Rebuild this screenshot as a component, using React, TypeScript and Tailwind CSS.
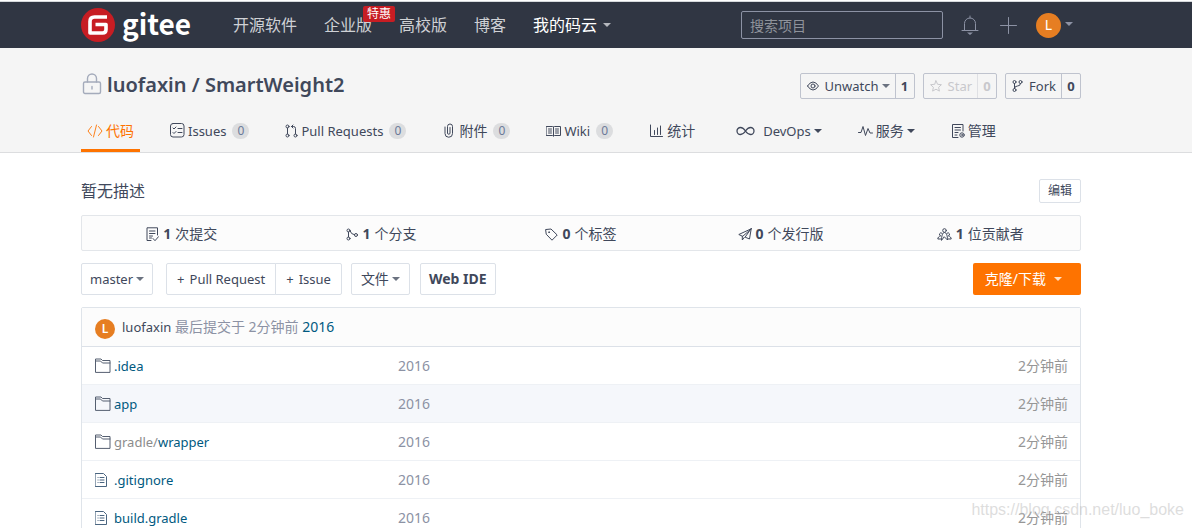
import type { ReactNode } from "react";

function Svg({ w, h, box, children, className = "" }: { w: number; h: number; box?: string; children: ReactNode; className?: string }) {
  return (
    <svg width={w} height={h} viewBox={box ?? `0 0 ${w} ${h}`} fill="none" stroke="currentColor" strokeWidth="1" strokeLinecap="round" strokeLinejoin="round" aria-hidden="true" className={"shrink-0 " + className}>
      {children}
    </svg>
  );
}

const Caret = ({ className = "" }: { className?: string }) => (
  <Svg w={8} h={4} className={className}>
    <path d="M0 0H8L4 4Z" fill="currentColor" stroke="none" />
  </Svg>
);

const CodeIcon = () => (
  <Svg w={16} h={14}>
    <path d="M4.500 2.500L1 7l3.500 4.500M11.500 2.500L15 7l-3.500 4.500M9.500 1L6.500 13" strokeWidth=".9" />
  </Svg>
);
const IssueIcon = () => (
  <Svg w={15} h={15}>
    <rect x="0.500" y="0.500" width="13.500" height="13.500" rx="2.500" />
    <path d="M3 5l1 1 2-2M3 9.500l1 1 2-2M8 5.500h4M8 9.500h4" />
  </Svg>
);
const PullIcon = () => (
  <Svg w={13} h={14}>
    <circle cx="2.500" cy="2.500" r="1.500" />
    <circle cx="2.500" cy="11.500" r="1.500" />
    <circle cx="10.500" cy="11.500" r="1.500" />
    <path d="M2.500 4v6M10.500 10V4.500Q10.500 2.500 8.500 2.500H6.500M8 1L6.500 2.500L8 4" />
  </Svg>
);
const ClipIcon = () => (
  <Svg w={14} h={15} box="-2 0 14 15">
    <path d="M1 4v6.500a3.700 3.700 0 0 0 7.500 0V3.500a2.500 2.500 0 0 0-5 0V10a1.200 1.200 0 0 0 2.500 0V4.500" />
  </Svg>
);
const WikiIcon = () => (
  <Svg w={15} h={12}>
    <path d="M.5 1.500h6l1 .5 1-.5h6v9h-6l-1 .5-1-.5h-6ZM7.500 2v9M2.500 4h3M2.500 6h3M2.500 8h3M9.500 4h3M9.500 6h3M9.500 8h3" />
  </Svg>
);
const ChartIcon = () => (
  <Svg w={15} h={13}>
    <path d="M1.500 1v11.500h12M5.500 6.500v4M8.500 4v6.500M11.500 2v8.500" />
  </Svg>
);
const LoopIcon = () => (
  <Svg w={24} h={10} box="-5 0 24 10">
    <path strokeWidth="1.300" d="M9.500 5C7.500 2 6 1.500 4.500 1.500a3.500 3.500 0 0 0 0 7C6 8.500 7.500 8 9.500 5s3.500-3.500 5-3.500a3.500 3.500 0 0 1 0 7c-1.500 0-3-.5-5-3.500Z" />
  </Svg>
);
const PulseIcon = () => (
  <Svg w={15} h={12}>
    <path d="M.5 7.500h2.500L5 1.500l2.500 9 2.500-7 2 4.500h2.500" />
  </Svg>
);
const ManageIcon = () => (
  <Svg w={14} h={14}>
    <path d="M7 13.500h-5.500V.5h10.500V7M4 3.500h5.500M4 6h5.500M4 8.500h3M4 11h2" />
    <circle cx="11" cy="11" r="2.200" />
    <circle cx="11" cy="11" r=".4" />
  </Svg>
);
const EyeIcon = () => (
  <Svg w={12} h={12}>
    <path d="M.5 6Q3 2 6 2t5.500 4Q9 10 6 10T.5 6Z" />
    <circle cx="6" cy="6" r="2" />
  </Svg>
);
const StarIcon = () => (
  <Svg w={12} h={12}>
    <path d="M6 .8l1.600 3.500 3.800.4-2.800 2.600.8 3.800L6 9.200l-3.400 1.900.8-3.800L.6 4.700l3.800-.4Z" />
  </Svg>
);
const ForkIcon = () => (
  <Svg w={11} h={12}>
    <circle cx="2.500" cy="2" r="1.500" />
    <circle cx="2.500" cy="10" r="1.500" />
    <circle cx="8.500" cy="2" r="1.500" />
    <path d="M2.500 3.500v5M8.500 3.500Q8.500 6 5.500 6T2.500 8.500" />
  </Svg>
);
const CommitIcon = () => (
  <Svg w={13} h={15}>
    <path d="M5 13.500H1V.8h10.500V8M3.500 4h5.500M3.500 6.500h5.500M3.500 9h3M3.500 11h2M7 11.500l2 2.200 3.500-4" />
  </Svg>
);
const BranchIcon = () => (
  <Svg w={12} h={13}>
    <circle cx="2.500" cy="2.500" r="1.500" />
    <circle cx="2.500" cy="10.500" r="1.500" />
    <circle cx="10" cy="7" r="1.500" />
    <path d="M2.500 4v5M4 2.800Q5 6.500 8.500 6.800" />
  </Svg>
);
const TagIcon = () => (
  <Svg w={13} h={13}>
    <path d="M1 1.500L6 1l6.200 6L7 12.200 1.500 6.500Z" />
    <circle cx="4" cy="4.200" r=".4" />
  </Svg>
);
const PlaneIcon = () => (
  <Svg w={14} h={13}>
    <path d="M13.200.8L.8 6.500l3.500 1.700ZM13.200.8L11.500 11l-4-1.700ZM4.300 8.200v3.800l2-2.600" />
  </Svg>
);
const PeopleIcon = () => (
  <Svg w={15} h={13}>
    <circle cx="7.500" cy="2.500" r="1.800" />
    <path d="M4.500 12c0-4 1-7.500 3-7.500s3 3.500 3 7.500L7.500 9ZM5 5.200a1.500 1.500 0 1 0-1.300 2.600C2 8.300.8 9.500.8 11h3.500M10 5.200a1.500 1.500 0 1 1 1.300 2.600c1.700.5 2.900 1.700 2.900 3.200h-3.500" />
  </Svg>
);
const FolderIcon = () => (
  <Svg w={16} h={15} className="text-[#555f70]">
    <path d="M.5 14V1h5.500l1.500 1.500h7.500v11.500ZM.5 3h5l2 2h7.500" />
  </Svg>
);
const FileIcon = () => (
  <Svg w={12} h={14} className="text-[#4a6580]">
    <path d="M.5.5h8l3 3v10H.5ZM3 4.500h.1M3 7h.1M3 9.500h.1M5 4.500h4M5 7h4M5 9.500h4" />
  </Svg>
);

function Badge() {
  return <span className="ml-[6px] flex h-4 w-[17px] items-center justify-center rounded-full bg-[#dcdddf] text-xs text-[#6b7a99]">0</span>;
}

const tabs: { label: string; icon: ReactNode; cjk?: boolean; count?: boolean; caret?: boolean; active?: boolean; wide?: boolean }[] = [
  { label: "代码", icon: <CodeIcon />, cjk: true, active: true },
  { label: "Issues", icon: <IssueIcon />, count: true },
  { label: "Pull Requests", icon: <PullIcon />, count: true },
  { label: "附件", icon: <ClipIcon />, cjk: true, count: true },
  { label: "Wiki", icon: <WikiIcon />, count: true },
  { label: "统计", icon: <ChartIcon />, cjk: true },
  { label: "DevOps", icon: <LoopIcon />, caret: true, wide: true },
  { label: "服务", icon: <PulseIcon />, cjk: true, caret: true },
  { label: "管理", icon: <ManageIcon />, cjk: true },
];

const stats = [
  { n: 1, label: "次提交", icon: <CommitIcon /> },
  { n: 1, label: "个分支", icon: <BranchIcon /> },
  { n: 0, label: "个标签", icon: <TagIcon /> },
  { n: 0, label: "个发行版", icon: <PlaneIcon /> },
  { n: 1, label: "位贡献者", icon: <PeopleIcon /> },
];

const files = [
  { name: ".idea", folder: true },
  { name: "app", folder: true, hover: true },
  { name: "wrapper", prefix: "gradle/", folder: true },
  { name: ".gitignore" },
  { name: "build.gradle" },
];

function SocialButton({ icon, label, count, caret, muted }: { icon: ReactNode; label: string; count: number; caret?: boolean; muted?: boolean }) {
  return (
    <div className={"flex h-[26px] rounded-xs border border-[#bfc3ce] " + (muted ? "text-[#c8c8cc]" : "")}>
      <button className="flex items-center pr-[5px] pl-[6px]">
        {icon}
        <span className="ml-[6px]">{label}</span>
        {caret && <Caret className="ml-[3px] text-[#6b7280]" />}
      </button>
      <a href="#count" className={"flex w-[19px] items-center justify-center border-l font-bold " + (muted ? "border-[#dfe0e4]" : "border-[#bfc3ce]")}>{count}</a>
    </div>
  );
}

const outline = "flex h-8 items-center rounded-xs border border-[#dce1e8] bg-white";

export default function App() {
  return (
    <div className="relative h-screen overflow-hidden bg-white font-['Noto_Sans','Noto_Sans_CJK_SC',sans-serif] text-[13px] leading-5 text-[#40485b]">
      <header className="mt-px border-t border-[#d5d9dc] bg-[#303643] pr-[30px]">
        <div className="mx-auto flex h-[46px] max-w-[1000px] items-center">
          <a href="#home" aria-label="gitee" className="flex items-center font-['Noto_Sans_CJK_SC',sans-serif] text-[28px] leading-8 font-bold text-white">
            <svg width="34" height="34" viewBox="0 0 34 34" aria-hidden="true" className="mr-[7px]">
              <circle cx="17" cy="17" r="17" fill="#c71d23" />
              <path d="M26 9H13.500Q9 9 9 13.500V25H21.500Q25 25 25 21.500V16.500H14.500" fill="none" stroke="#fff" strokeWidth="3.600" strokeLinejoin="round" />
            </svg>
            <span className="pb-1">gitee</span>
          </a>
          <nav className="ml-[42px] flex items-center gap-[27px] text-base whitespace-nowrap text-[#cfd1d5]">
            <a href="#oss">开源软件</a>
            <a href="#enterprise" className="relative">
              企业版
              <span className="absolute -top-[7px] left-[39px] rounded-xs bg-[#c71d23] px-1 text-xs leading-4 text-white">特惠</span>
            </a>
            <a href="#edu">高校版</a>
            <a href="#blog">博客</a>
            <a href="#mine" className="flex items-center text-white">我的码云<Caret className="ml-[6px] text-[#b5b8be]" /></a>
          </nav>
          <div className="ml-auto flex items-center">
            <input aria-label="搜索项目" placeholder="搜索项目" className="h-7 w-[202px] rounded-xs border border-[#8c92a4] bg-transparent px-2 text-sm text-white outline-none placeholder:text-[#8f939b]" />
            <button aria-label="通知" className="ml-[18px] text-[#8c92a4]">
              <Svg w={18} h={20}>
                <path d="M3.500 15V8.500a5.500 5.500 0 0 1 11 0V15M1 15.500h16M9 3V1" />
                <path d="M6 17.500h6L9 20Z" fill="currentColor" stroke="none" />
              </Svg>
            </button>
            <button aria-label="新建" className="ml-5 text-[#8c92a4]">
              <Svg w={19} h={19}><path d="M9.500 1.500v16M1.500 9.500h16" /></Svg>
            </button>
            <button aria-label="用户" className="ml-[18px] flex items-center">
              <span className="flex size-[25px] items-center justify-center rounded-full bg-[#e67e22] text-sm text-white">L</span>
              <Caret className="mr-2 mb-[2px] ml-1 text-[#8c92a4]" />
            </button>
          </div>
        </div>
      </header>

      <section className="border-b border-[#dcdddf] bg-[#f5f5f5] pr-[30px]">
        <div className="mx-auto max-w-[1000px] pt-6">
          <div className="flex items-center">
            <Svg w={20} h={22} className="mr-[5px] mb-1 ml-px text-[#a4abbb]">
              <g strokeWidth="1.400">
                <rect x="1.500" y="9" width="17" height="11.500" rx="1.500" />
                <path d="M5.500 9V5.500a4.500 4.500 0 0 1 9 0V9M10 13.500v2.500" />
              </g>
            </Svg>
            <h1 className="pb-[2px] text-xl leading-6 font-semibold">
              <a href="#owner">luofaxin</a> / <a href="#repo">SmartWeight2</a>
            </h1>
            <div className="mt-px ml-auto flex gap-2">
              <SocialButton icon={<EyeIcon />} label="Unwatch" count={1} caret />
              <SocialButton icon={<StarIcon />} label="Star" count={0} muted />
              <SocialButton icon={<ForkIcon />} label="Fork" count={0} />
            </div>
          </div>
          <nav className="mt-[10px] flex h-[43px] gap-6 whitespace-nowrap">
            {tabs.map((t) => (
              <a key={t.label} href={"#" + t.label} className={"flex items-center border-b-3 px-[6px] pt-[3px] " + (t.active ? "border-[#fe7300] text-[#fe7300]" : "border-transparent")}>
                {t.icon}
                <span className={(t.wide ? "ml-2" : "ml-[3px]") + (t.cjk ? " text-sm" : "")}>{t.label}</span>
                {t.count && <Badge />}
                {t.caret && <Caret className="ml-[3px]" />}
              </a>
            ))}
          </nav>
        </div>
      </section>

      <main className="pr-[30px]">
        <div className="mx-auto max-w-[1000px] pt-[26px]">
          <div className="flex h-6 items-center justify-between">
            <p className="text-base">暂无描述</p>
            <button className="h-6 rounded-xs border border-[#dce1e8] px-2 text-xs">编辑</button>
          </div>
          <div className="mt-3 grid h-9 grid-cols-5 rounded-xs border border-[#e3e6ea] bg-[#fcfcfc] pt-[2px]">
            {stats.map((s) => (
              <a key={s.label} href={"#" + s.label} className="flex items-center justify-center gap-1 text-sm">
                {s.icon}
                <b>{s.n}</b>
                <span>{s.label}</span>
              </a>
            ))}
          </div>
          <div className="mt-3 flex whitespace-nowrap">
            <button className={outline + " px-2"}>master<Caret className="ml-[3px] text-[#6b7280]" /></button>
            <div className="ml-[13px] flex">
              <button className={outline + " gap-[5px] rounded-r-none px-[10px]"}><span>+</span><span>Pull Request</span></button>
              <button className={outline + " -ml-px gap-[5px] rounded-l-none px-[10px]"}><span>+</span><span>Issue</span></button>
            </div>
            <button className={outline + " ml-[9px] px-[9px] text-sm"}>文件<Caret className="ml-[3px] text-[#6b7280]" /></button>
            <button className={outline + " ml-[10px] px-2 text-sm font-bold"}>Web IDE</button>
            <button className="ml-auto flex h-8 items-center rounded-xs bg-[#fe7300] pr-[19px] pl-3 text-sm text-white">克隆/下载<Caret className="ml-2 text-[#ffe0c4]" /></button>
          </div>

          <div className="mt-3 rounded-t-xs border border-[#dfe4ea]">
            <div className="flex h-[39px] items-center border-b border-[#dce1e8] bg-[#fcfcfc] px-[13px]">
              <span className="mt-1 mr-[7px] flex size-5 items-center justify-center rounded-full bg-[#e67e22] text-xs font-semibold text-white">L</span>
              <p className="text-sm text-[#8c92a4]">
                <a href="#user" className="text-[13px] text-[#40485b]">luofaxin</a> 最后提交于 2分钟前 <a href="#commit" className="text-[#005980]">2016</a>
              </p>
            </div>
            <table className="w-full table-fixed border-separate border-spacing-0">
              <tbody>
                {files.map((f) => (
                  <tr key={f.name} className={"h-[38px] *:border-b *:border-[#eef1f5] " + (f.hover ? "bg-[#f5f7fb]" : "")}>
                    <td className="w-[316px] pl-[13px]">
                      <a href={"#" + f.name} className="flex items-center text-[#005980]">
                        <span className="mr-[3px] w-4">{f.folder ? <FolderIcon /> : <FileIcon />}</span>
                        {f.prefix && <span className="text-[#8c8c8c]">{f.prefix}</span>}
                        {f.name}
                      </a>
                    </td>
                    <td className="text-sm text-[#8c92a4]">2016</td>
                    <td className="w-[120px] pr-3 text-right text-sm text-[#969696]">2分钟前</td>
                  </tr>
                ))}
              </tbody>
            </table>
          </div>
        </div>
      </main>
      <p className="absolute right-2 bottom-[6px] font-['Liberation_Sans',sans-serif] text-base text-[#bbbbbb]/50">https://blog.csdn.net/luo_boke</p>
    </div>
  );
}
